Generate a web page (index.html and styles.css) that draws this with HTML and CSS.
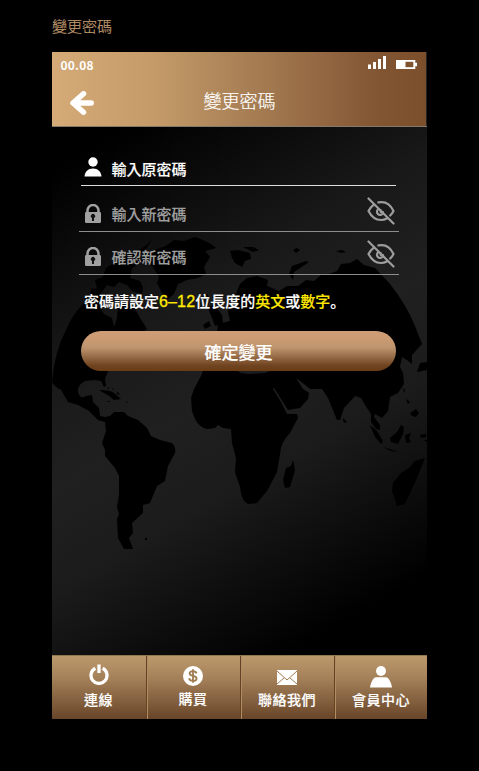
FILE: index.html
```html
<!DOCTYPE html>
<html lang="zh-Hant">
<head>
<meta charset="utf-8">
<title>變更密碼</title>
<link rel="stylesheet" href="styles.css">
</head>
<body>
<h1 class="caption">變更密碼</h1>
<main class="phone">
  <header class="header">
    <div class="status">
      <span class="time">00.08</span>
      <svg class="signals" width="50" height="14" viewBox="0 0 50 14" fill="#fff"><path d="M0 8.500h3V13H0zM5 6h3v7H5zM10 3h3v10h-3zM15 0h3v13h-3zM28 4h19.300v2.800H49v3.500h-1.700V13H28z"/><path fill="#80532f" d="M37.500 5.800h7.800v5.400h-7.800z"/></svg>
    </div>
    <div class="titlebar">
      <svg class="back" width="24" height="24" viewBox="0 0 24 24" fill="none" stroke="#fff" stroke-width="5.500" stroke-linecap="round" stroke-linejoin="round"><path d="M13.500 2.800L3 12l10.500 9.200M4 12h17.200"/></svg>
      <h2 class="title">變更密碼</h2>
    </div>
  </header>
  <section class="content">
    <svg class="map" viewBox="52 127 375 528" aria-hidden="true">
      <path d="M52 381Q55 350 66 330Q72 315 83 304L90 297L91 288L97 289L95 280L103 277L106 268L117 261L129 254L138 250L144 247L152 240L145 250L137 257L144 261L132 268L130 278L140 281L143 288L142 294L132 291L127 285L119 282L114 287L107 285L101 293L99 305L104 314L112 318L114 327L117 318L118 306L123 299L134 307L140 318L147 329L137 336L124 346L117 360L108 371L105 379L106 386L104 387L101 381L95 380L85 381Q77 385 78 392Q80 400 86 396L92 395L93 402L99 408L100 416L105 417L110 416L114 412L124 412L128 416L138 420L147 428L151 436L160 440L172 443Q176 447 175 453L168 466L165 481L157 486L150 503L143 505L143 513L132 523L133 533L129 538L133 549L124 549L118 538L117 519L119 514L117 507L119 495L119 476L115 468L105 456L105 450L102 443L106 431L105 422L98 420L89 411L78 405L68 402L60 388L60 390L53 384z"/>
      <path d="M143 254L154 250L166 246L174 240L184 241L195 237L203 240L211 244L216 248L205 251L210 257L204 267L206 274L198 278L187 280L178 284L174 294L168 299L162 293L157 283L159 277L153 267L143 259z"/>
      <path d="M99 390q12 0 15 3l7 6-7 1-5-4zM106 402l4-1v1zM116 391l4 3-2 1zM112 388l2 1-1 1zM126 402l2-1-1 2zM107 388l2-1v2zM145 538h2v2h-2z"/>
      <path d="M202 374L194 389L191 398L192 411Q197 428 208 429L215 428L218 425L223 428L231 429L232 443L236 458L235 472L240 487Q242 503 249 504L257 503L267 491L277 472L281 448Q283 440 290 433L298 418L297 414L287 414L281 402L273 389L274 388L288 410L300 408L308 399L309 393L303 389L296 378L304 384L310 389L322 389L328 398L337 420L340 420L344 408L355 396L361 398L365 405L371 414L371 422L376 429L380 430L380 425L374 417L375 414L382 418L388 411L390 397L398 393L404 384L403 373L400 367L402 357L407 360L412 364L412 355L422 344L415 326Q406 304 390 284L375 268L364 265L357 259L350 263L341 264L337 271L329 274L321 275L314 281L306 280L298 286L287 286L279 291L267 286L268 280L257 276L247 278L240 284L235 296L238 303L229 304L228 312L230 321L218 324L217 332L207 334L207 344L211 354L204 365z"/>
      <path class="sea" d="M238 371h32l-5 2-17 1-7-1z"/>
      <path d="M230 251l8-1 12 3 1 6-6 2-3 6-7-4-3-5zM243 247l10 0 6 3-6 2zM293 250l4-2 3 2-4 3zM289 274l3-8 14-5 3 1-15 10-1 8zM336 251l6-1 4 2-5 1zM208 308l6-4 8 11 1 8-8 3-3-8zM203 325l6-4 2 5-6 3zM202 297l5-3 2 3-5 3z"/>
      <path d="M293 460l2 10-5 17-5 1-2-8 3-12 5-2zM343 418l4 4-2 1-2-2zM370 425l7 6 6 10-2 3-6-7zM383 447l7 2 8 3-7-1zM401 425l3 2-1 7-5 10-7-2-1-4 7-6zM405 435l6-2-2 5 2 4-5 1zM410 413l6-4 3 4-3 4-4-1zM403 388l2 2-1 3zM406 399l4 3-2 2zM425 458l-8 20-12 26-8 2-3-10-2-4 1-9 8-10 8-5 6-7zM417 372l3-9 7-1v8zM420 435l6-1v3l-5 1zM423 440h4v2z"/>
    </svg>
    <form class="form">
      <label class="field active">
        <svg class="person" width="18" height="20" viewBox="0 0 18 20" fill="currentColor"><circle cx="9" cy="5" r="4.700"/><path d="M.5 19.500c.4-5 3.500-8 8.500-8s8 3 8.500 8z"/></svg>
        <span>輸入原密碼</span>
      </label>
      <label class="field second">
        <svg class="lock" width="18" height="20" viewBox="0 0 18 20"><path d="M3.500 10V6.500a5.500 5.500 0 0111 0V10" fill="none" stroke="currentColor" stroke-width="2.500"/><rect x="1" y="8" width="16" height="11" rx="1.200" fill="currentColor"/><path d="M8 17v-3a2.100 2.100 0 112 0v3z" fill="#111"/></svg>
        <span>輸入新密碼</span>
        <svg class="eye" width="28" height="28" viewBox="0 0 28 28"><use href="#hidden-eye"/></svg>
      </label>
      <label class="field third">
        <svg class="lock" width="18" height="20" viewBox="0 0 18 20"><path d="M3.500 10V6.500a5.500 5.500 0 0111 0V10" fill="none" stroke="currentColor" stroke-width="2.500"/><rect x="1" y="8" width="16" height="11" rx="1.200" fill="currentColor"/><path d="M8 17v-3a2.100 2.100 0 112 0v3z" fill="#111"/></svg>
        <span>確認新密碼</span>
        <svg class="eye" width="28" height="28" viewBox="0 0 28 28"><g id="hidden-eye" fill="none" stroke="#9d9d9d" stroke-width="2.200" stroke-linecap="round" stroke-linejoin="round"><path d="M1.500 1.500l25 25M6.300 8.100C4.500 9.400 3 11.200 1.500 14c3 5.800 7.300 9 12.500 9 2.100 0 4-.5 5.700-1.500M11.400 5.400C18 4 23.500 7.400 26.500 14c-.8 1.600-1.800 3-3.300 4.500M11.300 12.200a3.100 3.100 0 104.500 4M13.700 13v2H16"/></g></svg>
      </label>
      <p class="hint">密碼請設定<em class="num">6–12</em>位長度的<em>英文</em>或<em>數字</em><span class="stop" lang="zh-Hans">。</span></p>
      <button class="submit" type="button">確定變更</button>
    </form>
  </section>
  <nav class="tabs">
    <a class="tab power"><svg width="20" height="21" viewBox="0 0 20 21" fill="none" stroke="#fff" stroke-width="3.300"><path d="M6.300 4.300a8 8 0 107.400 0M10 .500v8.500"/></svg><span>連線</span></a>
    <a class="tab buy"><svg width="20" height="20" viewBox="0 0 20 20"><circle cx="10" cy="10" r="10" fill="#fff"/><path d="M13.600 7.300C13 5.800 11.700 5.200 10 5.200c-2 0-3.400.8-3.400 2.300 0 3.200 7 1.500 7 4.900 0 1.600-1.500 2.500-3.600 2.500-2 0-3.500-.8-3.900-2.600M10 3.200v13.600" fill="none" stroke="#a07b50" stroke-width="1.800"/></svg><span>購買</span></a>
    <a class="tab mail"><svg width="20" height="15" viewBox="0 0 20 15"><path fill="#fff" d="M0 0h20v15H0z"/><path d="M0 1l10 9L20 1M0 14l7-6M20 14l-7-6" fill="none" stroke="#a07b50"/></svg><span>聯絡我們</span></a>
    <a class="tab member"><svg width="22" height="22" viewBox="0 0 22 22" fill="#fff"><circle cx="11" cy="5" r="5"/><path d="M0 21.500C1 15.500 3.500 11.500 6 11.300h10c2.500.2 5 4.200 6 10.200z"/></svg><span>會員中心</span></a>
  </nav>
</main>
</body>
</html>
```

FILE: styles.css
```css
* { box-sizing: border-box; }
body {
  margin: 0;
  height: 771px;
  overflow: hidden;
  background: #000;
  color: #fff;
  font-family: "Noto Sans CJK TC", sans-serif;
}
svg { display: block; flex: none; }
.caption {
  margin: 0;
  padding: 15px 0 0 52px;
  height: 52px;
  font-size: 15px;
  line-height: 22px;
  font-weight: 300;
  -webkit-text-stroke: .2px;
  color: #c09b70;
}
.phone { width: 375px; height: 667px; margin-left: 52px; display: flex; flex-direction: column; }
.header {
  height: 75px;
  background: linear-gradient(90deg, #d4aa77 0%, #c69d6a 25%, #a77e54 53%, #815432 88%, #7b4e2c 100%);
  border-bottom: 1px solid #85796b;
  box-shadow: inset -1px 0 #222;
}
.status { display: flex; justify-content: space-between; height: 26px; padding: 4px 9px 0 8px; }
.time { font: 700 12px/17px "Noto Sans CJK TC", sans-serif; letter-spacing: .2px; padding-left: .5px; }
.titlebar { display: grid; grid-template-columns: 60px 1fr 60px; align-items: center; height: 49px; }
.back { margin: 0 0 0 18px; }
.title { margin: 0; padding-bottom: 5px; text-align: center; font-size: 18px; font-weight: 300; line-height: 26px; -webkit-text-stroke: .2px; }
.content {
  position: relative;
  height: 528px;
  background: linear-gradient(150deg, #000 6%, #191919 33%, #202020 49%, #1b1b1b 63%, #000 89%);
}
.map { position: absolute; inset: 0; width: 375px; height: 528px; }
.sea { fill: #1c1c1c; }
.form { position: relative; padding: 17px 28px 0 27px; }
.field {
  display: flex;
  align-items: center;
  gap: 10px;
  padding-left: 5px;
  color: #a0a0a0;
  font-size: 15px;
  font-weight: 500;
  line-height: 22px;
  border-bottom: 1px solid #8d8d8d;
}
.field span, .hint, .submit, .tab span { -webkit-text-stroke: .15px; }
.field span { margin-left: -.5px; }
.field.active { height: 42px; margin: 0 3px 0 2px; padding: 9px 0 0 3px; color: #fff; border-bottom: 1px solid #ddd; }
.active .person { margin-top: -4px; }
.second { height: 46px; padding-top: 11px; }
.third { height: 43px; padding-top: 8px; }
.third span { margin-top: -1px; }
.eye { margin: -6px 4px 0 auto; }
.hint { margin: 14px 0 0 5px; font-size: 15px; line-height: 24px; font-weight: 500; white-space: nowrap; }
.hint em { font-style: normal; color: #ffe900; }
.hint .num { font-family: "Liberation Sans", sans-serif; font-size: 16px; letter-spacing: .15px; -webkit-text-stroke: .3px; }
.hint .stop { font-family: "Noto Sans CJK SC", sans-serif; }
.submit {
  display: block;
  width: 315px;
  height: 40px;
  margin: 17px 0 0 2px;
  padding: 1px 0 0;
  border: 0;
  border-radius: 20px;
  background: linear-gradient(#d09e76 0%, #cb9b73 20%, #bd946e 42%, #6f431f 87%, #6a3c16 100%);
  color: #fff;
  font: 500 17px/38px "Noto Sans CJK TC", sans-serif;
}
.tabs {
  display: grid;
  grid-template-columns: 95px 94px 94px 92px;
  height: 64px;
  background: linear-gradient(#bd9a6d, #a38058 37%, #694529);
}
.tab {
  display: flex;
  flex-direction: column;
  align-items: center;
  padding: 10px 2px 0 0;
  border-top: 1px solid #927650;
  box-shadow: inset -1px 0 #624126, inset 1px 0 #b38d61;
  font-size: 14px;
  line-height: 20px;
  font-weight: 500;
}
.tab.power { padding-top: 8px; box-shadow: inset -1px 0 #624126; }
.tab.member { padding-right: 0; box-shadow: inset 1px 0 #b38d61; }
.tab span { margin-top: auto; padding-bottom: 10px; letter-spacing: .5px; }
.tab.buy span { padding-bottom: 11px; }
.tab.mail { padding-top: 14px; }
```
